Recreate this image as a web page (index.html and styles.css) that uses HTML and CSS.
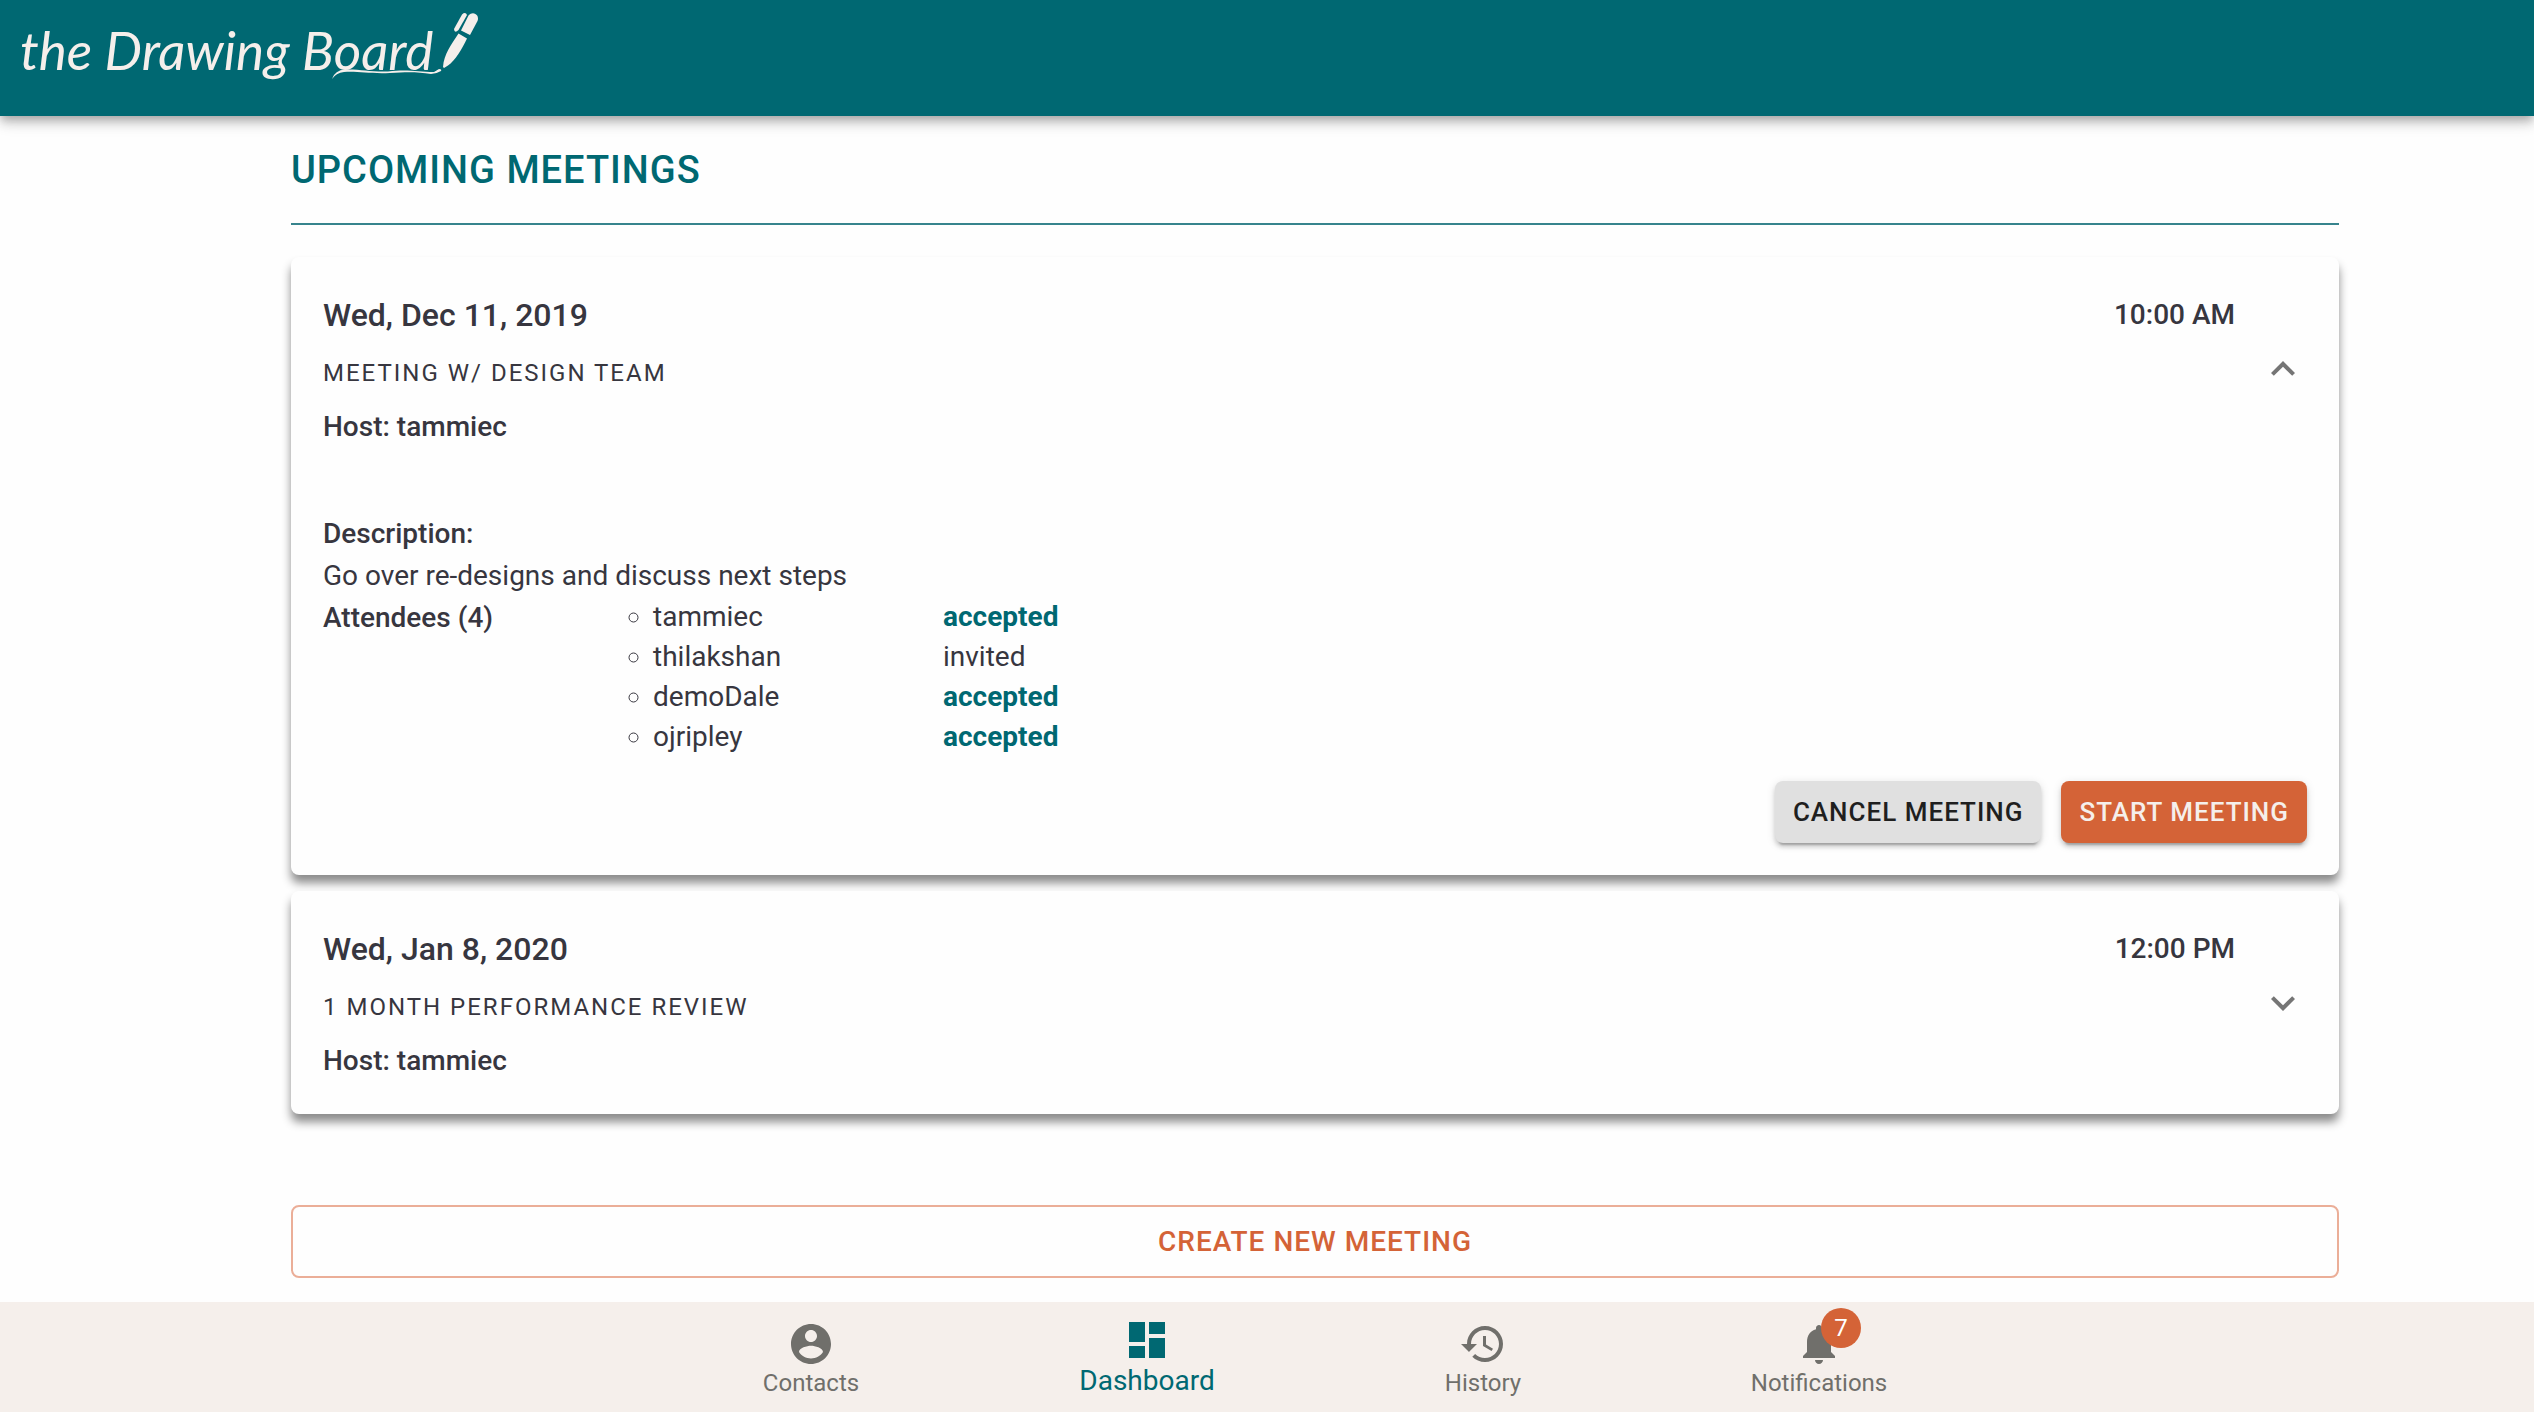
FILE: index.html
```html
<!DOCTYPE html>
<html lang="en">
<head>
  <meta charset="utf-8">
  <meta name="viewport" content="width=device-width, initial-scale=1">
  <title>The Drawing Board</title>
  <link rel="stylesheet" href="styles.css">
</head>
<body>
  <header class="app-bar">
    <a class="logo" href="#">
      <span class="logo-text">the Drawing Board</span>
      <svg class="logo-pen" viewBox="0 0 150 70" aria-hidden="true">
        <path d="M2 67 Q5 58 15 57.500 C30 57 40 60 58 59.500 C78 57 88 60 104 60 L109 57 Q112 57 111 59 Q106 62 101 62 C88 60 78 60 60 61 C40 62 28 59 14 60 Q6 61 2 67 Z"/>
        <path d="M128.500 21.500 L137 26.500 C132 37 125 49 118 53.500 L114 56 L113 55 C114 42 121 33 128.500 21.500 Z"/>
        <path d="M131 18.500 L140 23 L147.500 9 C150 3 143 -2 138.500 3.500 Z"/>
        <path d="M124 17 L132 2.500 Q135.500 -.5 137 3 L128.500 18 Q124.500 22 124 17 Z"/>
      </svg>
    </a>
  </header>

  <main class="page">
    <h1 class="page-title">Upcoming Meetings</h1>

    <section class="meetings" aria-label="Upcoming meetings">
      <article class="card">
        <div class="card-summary">
          <div class="card-row">
            <h2 class="date">Wed, Dec 11, 2019</h2>
            <p class="time">10:00 AM</p>
          </div>
          <p class="topic">Meeting w/ Design Team</p>
          <p class="label">Host: tammiec</p>
          <button class="toggle" type="button" aria-expanded="true" aria-label="Collapse meeting">
            <svg class="icon" viewBox="0 0 24 24"><path d="M12 8l-6 6 1.410 1.410L12 10.830l4.590 4.580L18 14z"/></svg>
          </button>
        </div>
        <div class="card-details">
          <h3 class="label">Description:</h3>
          <p class="text">Go over re-designs and discuss next steps</p>
          <div class="attendees">
            <h3 class="label">Attendees (4)</h3>
            <ul class="attendee-list">
              <li><span class="attendee">tammiec</span><span class="status accepted">accepted</span></li>
              <li><span class="attendee">thilakshan</span><span class="status">invited</span></li>
              <li><span class="attendee">demoDale</span><span class="status accepted">accepted</span></li>
              <li><span class="attendee">ojripley</span><span class="status accepted">accepted</span></li>
            </ul>
          </div>
          <div class="actions">
            <button class="button" type="button">Cancel Meeting</button>
            <button class="button primary" type="button">Start Meeting</button>
          </div>
        </div>
      </article>

      <article class="card">
        <div class="card-summary">
          <div class="card-row">
            <h2 class="date">Wed, Jan 8, 2020</h2>
            <p class="time">12:00 PM</p>
          </div>
          <p class="topic">1 Month Performance Review</p>
          <p class="label">Host: tammiec</p>
          <button class="toggle" type="button" aria-expanded="false" aria-label="Expand meeting">
            <svg class="icon" viewBox="0 0 24 24"><path d="M16.590 8.590L12 13.170 7.410 8.590 6 10l6 6 6-6z"/></svg>
          </button>
        </div>
      </article>
    </section>

    <button class="create" type="button">Create New Meeting</button>
  </main>

  <nav class="bottom-nav" aria-label="Main">
    <a class="nav-item" href="#">
      <svg class="icon" viewBox="0 0 24 24"><path d="M12 2C6.480 2 2 6.480 2 12s4.480 10 10 10 10-4.480 10-10S17.520 2 12 2zm0 3c1.660 0 3 1.340 3 3s-1.340 3-3 3-3-1.340-3-3 1.340-3 3-3zm0 14.200c-2.500 0-4.710-1.280-6-3.220.03-1.990 4-3.080 6-3.080 1.990 0 5.970 1.090 6 3.080-1.290 1.940-3.500 3.220-6 3.220z"/></svg>
      <span>Contacts</span>
    </a>
    <a class="nav-item selected" href="#" aria-current="page">
      <svg class="icon" viewBox="0 0 24 24"><path d="M3 13h8V3H3v10zm0 8h8v-6H3v6zm10 0h8V11h-8v10zm0-18v6h8V3h-8z"/></svg>
      <span>Dashboard</span>
    </a>
    <a class="nav-item" href="#">
      <svg class="icon" viewBox="0 0 24 24"><path d="M13 3c-4.970 0-9 4.030-9 9H1l3.890 3.890.07.14L9 12H6c0-3.870 3.130-7 7-7s7 3.130 7 7-3.130 7-7 7c-1.930 0-3.680-.79-4.940-2.060l-1.420 1.420C8.270 19.990 10.510 21 13 21c4.970 0 9-4.030 9-9s-4.030-9-9-9zm-1 5v5l4.280 2.540.72-1.210-3.500-2.080V8H12z"/></svg>
      <span>History</span>
    </a>
    <a class="nav-item" href="#">
      <span class="badge-anchor">
        <svg class="icon" viewBox="0 0 24 24"><path d="M12 22c1.100 0 2-.9 2-2h-4c0 1.100.89 2 2 2zm6-6v-5c0-3.070-1.640-5.640-4.500-6.320V4c0-.83-.67-1.500-1.500-1.500s-1.500.67-1.500 1.500v.68C7.630 5.360 6 7.920 6 11v5l-2 2v1h16v-1l-2-2z"/></svg>
        <span class="badge">7</span>
      </span>
      <span>Notifications</span>
    </a>
  </nav>
</body>
</html>
```
FILE: styles.css
```css
:root {
  --teal: #006872;
  --orange: #d46337;
  --sand: #f5efeb;
  --ink: #37363f;
  --grey: #706f6b;
}

* {
  box-sizing: border-box;
}

body {
  min-height: 100vh;
  margin: 0;
  display: flex;
  flex-direction: column;
  background: #fefefe;
  color: var(--ink);
  font-family: Roboto, "Liberation Sans", sans-serif;
  font-size: 28px;
}

h1, h2, h3, p, ul {
  margin: 0;
  padding: 0;
}

button {
  font-family: inherit;
  cursor: pointer;
}

.icon {
  display: block;
  width: 48px;
  height: 48px;
  fill: currentColor;
}

.app-bar {
  height: 116px;
  padding: 12px 20px;
  background: var(--teal);
  box-shadow: 0 4px 8px -2px rgba(0, 0, 0, 0.2), 0 8px 10px rgba(0, 0, 0, 0.14), 0 2px 20px rgba(0, 0, 0, 0.12);
}

.logo {
  position: relative;
  display: inline-block;
  color: var(--sand);
  text-decoration: none;
}

.logo-text {
  font: italic 400 53px/76px Lato, sans-serif;
}

.logo-pen {
  position: absolute;
  left: 310px;
  top: 0;
  width: 150px;
  height: 70px;
  overflow: visible;
  fill: currentColor;
}

.page {
  flex: 1;
  width: 100%;
  max-width: 2144px;
  margin: 0 auto;
  padding-left: 96px;
}

.page-title {
  padding: 30px 0 29px;
  border-bottom: 2px solid #37848d;
  color: var(--teal);
  font-size: 38px;
  font-weight: 500;
  line-height: 48px;
  letter-spacing: 1px;
  text-transform: uppercase;
}

.meetings {
  display: grid;
  gap: 16px;
  margin-top: 32px;
}

.card {
  padding: 34px 32px 32px;
  border-radius: 8px;
  background: #fefefe;
  box-shadow: 0 8px 10px rgba(0, 0, 0, 0.45);
}

.card-summary {
  position: relative;
}

.card-row {
  display: flex;
  justify-content: space-between;
  padding-right: 72px;
}

.date {
  font-size: 32px;
  font-weight: 500;
  line-height: 48px;
}

.time {
  font-weight: 500;
  line-height: 48px;
}

.topic {
  margin: 12px 0 11px;
  font-size: 24px;
  line-height: 44px;
  letter-spacing: 2px;
  text-transform: uppercase;
}

.label {
  font-size: 28px;
  font-weight: 500;
  line-height: 42px;
}

.toggle {
  position: absolute;
  right: 0;
  top: 54px;
  padding: 0;
  border: 0;
  background: none;
  color: #757575;
}

.card-details {
  padding-top: 65px;
}

.text {
  line-height: 42px;
}

.attendees {
  display: flex;
  line-height: 40px;
}

.attendees .label {
  width: 330px;
}

.attendee-list {
  list-style: circle;
}

.attendee {
  display: inline-block;
  width: 290px;
}

.accepted {
  color: var(--teal);
  font-weight: 700;
}

.actions {
  display: flex;
  justify-content: flex-end;
  gap: 20px;
  margin-top: 24px;
}

.button {
  padding: 10px 18px;
  border: 0;
  border-radius: 8px;
  background: #e0e0e0;
  color: #1f1f1f;
  box-shadow: 0 6px 2px -4px rgba(0, 0, 0, 0.2), 0 4px 4px rgba(0, 0, 0, 0.14), 0 2px 10px rgba(0, 0, 0, 0.12);
  font-size: 26px;
  font-weight: 500;
  line-height: 42px;
  letter-spacing: 1px;
  text-transform: uppercase;
}

.button.primary {
  background: var(--orange);
  color: var(--sand);
}

.create {
  width: 100%;
  margin: 91px 0 23px;
  padding: 14px;
  border: 2px solid #ebae98;
  border-radius: 8px;
  background: none;
  color: var(--orange);
  font-size: 28px;
  font-weight: 500;
  line-height: 41px;
  letter-spacing: 1px;
  text-transform: uppercase;
}

.bottom-nav {
  display: flex;
  justify-content: center;
  height: 110px;
  padding-left: 96px;
  background: var(--sand);
}

.nav-item {
  flex: 0 1 336px;
  display: flex;
  flex-direction: column;
  align-items: center;
  padding-top: 18px;
  color: var(--grey);
  font-size: 24px;
  line-height: 30px;
  text-decoration: none;
}

.nav-item.selected {
  padding-top: 14px;
  color: var(--teal);
  font-size: 28px;
  line-height: 34px;
}

.badge-anchor {
  position: relative;
}

.badge {
  position: absolute;
  right: -18px;
  top: -12px;
  width: 40px;
  border-radius: 50%;
  background: var(--orange);
  color: #fff;
  font-size: 24px;
  line-height: 40px;
  text-align: center;
}
```
